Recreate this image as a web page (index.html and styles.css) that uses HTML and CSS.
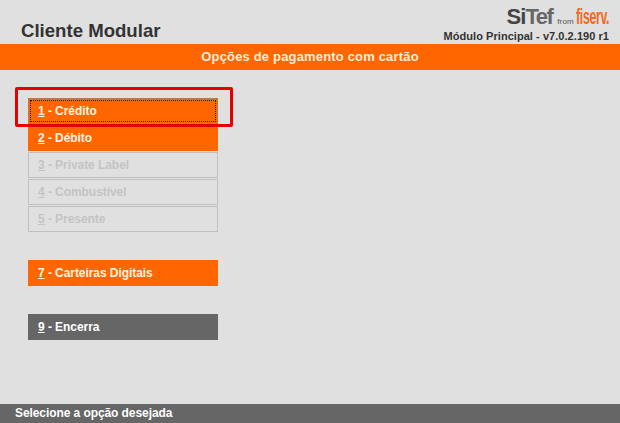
FILE: index.html
```html
<!DOCTYPE html>
<html lang="pt-BR">
<head>
<meta charset="utf-8">
<title>Cliente Modular</title>
<link rel="stylesheet" href="styles.css">
</head>
<body>
<div class="app">
  <header class="header">
    <h1 class="title">Cliente Modular</h1>
    <div class="brand">
      <div class="logo"><span class="logo-si">Si</span><span class="logo-tef">Tef</span><span class="logo-from">from</span><span class="logo-fiserv">fiserv.</span></div>
      <div class="version">Módulo Principal - v7.0.2.190 r1</div>
    </div>
  </header>
  <div class="banner">Opções de pagamento com cartão</div>
  <main class="menu">
    <div class="group">
      <div class="option option-on option-focus"><span class="focus-ring"><u>1</u> - Crédito</span></div>
      <div class="option option-on"><span class="label"><u>2</u> - Débito</span></div>
      <div class="option option-off"><span class="label"><u>3</u> - Private Label</span></div>
      <div class="option option-off"><span class="label"><u>4</u> - Combustível</span></div>
      <div class="option option-off"><span class="label"><u>5</u> - Presente</span></div>
    </div>
    <div class="group">
      <div class="option option-on"><span class="label"><u>7</u> - Carteiras Digitais</span></div>
    </div>
    <div class="group">
      <div class="option option-dark"><span class="label"><u>9</u> - Encerra</span></div>
    </div>
  </main>
  <footer class="status">Selecione a opção desejada</footer>
  <div class="highlight"></div>
</div>
</body>
</html>
```
FILE: styles.css
```css
html, body {
  margin: 0;
  padding: 0;
  height: 100%;
  overflow: hidden;
}
.app {
  position: relative;
  display: flex;
  flex-direction: column;
  height: 423px;
  background: #e0e0e0;
  font-family: "Liberation Sans", Arial, sans-serif;
}
.header {
  height: 44px;
  display: flex;
  justify-content: space-between;
  align-items: flex-end;
  padding: 0 11px 0 21px;
  color: #333;
}
.title {
  margin: 0 0 2px;
  font-size: 18.6px;
  line-height: 22px;
  font-weight: bold;
}
.brand {
  display: flex;
  flex-direction: column;
  align-items: flex-end;
}
.logo {
  display: flex;
  align-items: baseline;
  height: 27px;
  line-height: 27px;
}
.logo-si {
  font-size: 22px;
  font-weight: bold;
  color: #444;
  letter-spacing: -0.8px;
}
.logo-tef {
  font-size: 22px;
  color: #666;
  font-weight: bold;
  letter-spacing: -1.6px;
}
.logo-from {
  font-size: 8px;
  color: #555;
  margin: 0 2px 0 5px;
  letter-spacing: 0.2px;
}
.logo-fiserv {
  font-size: 17px;
  font-weight: bold;
  color: #f26a21;
  letter-spacing: -0.4px;
  display: inline-block;
  width: 33px;
  white-space: nowrap;
  transform: translateY(2px) scaleX(0.72) scaleY(1.25);
  transform-origin: left bottom;
}
.version {
  font-size: 11px;
  line-height: 13px;
  font-weight: bold;
  letter-spacing: 0.05px;
  margin-bottom: 1px;
}
.banner {
  height: 26px;
  line-height: 26px;
  background: #ff6600;
  color: #fdeede;
  text-align: center;
  font-size: 13px;
  font-weight: bold;
  letter-spacing: 0.17px;
}
.menu {
  flex: 1;
  padding: 28px 0 0 28px;
  display: flex;
  flex-direction: column;
  gap: 28px;
}
.group {
  display: flex;
  flex-direction: column;
  gap: 1px;
  width: 190px;
}
.option {
  box-sizing: border-box;
  height: 26px;
  font-size: 12px;
  font-weight: bold;
  line-height: 24px;
  letter-spacing: -0.06px;
}
.label {
  display: block;
  padding-left: 9px;
  border: 1px solid transparent;
}
.option-on {
  background: #ff6600;
  color: #fdf3e6;
}
.option-focus {
  border: 1px solid #b5794f;
  padding: 1px;
  line-height: 20px;
}
.focus-ring {
  display: block;
  height: 20px;
  padding-left: 7px;
  border: 1px dotted #222;
  line-height: 20px;
}
.option-off {
  background: #e0e0e0;
  color: #c4c4c4;
  border: 1px solid #c0c0c0;
  line-height: 24px;
}
.option-off .label {
  border: 0;
}
.option-dark {
  background: #666;
  color: #fff;
}
.status {
  height: 19px;
  line-height: 19px;
  background: #666;
  color: #fff;
  font-size: 12px;
  font-weight: bold;
  padding-left: 15px;
  letter-spacing: -0.08px;
}
.highlight {
  position: absolute;
  left: 15px;
  top: 87px;
  width: 212px;
  height: 34px;
  border: 3px solid #e60000;
  border-radius: 2px;
}
```
